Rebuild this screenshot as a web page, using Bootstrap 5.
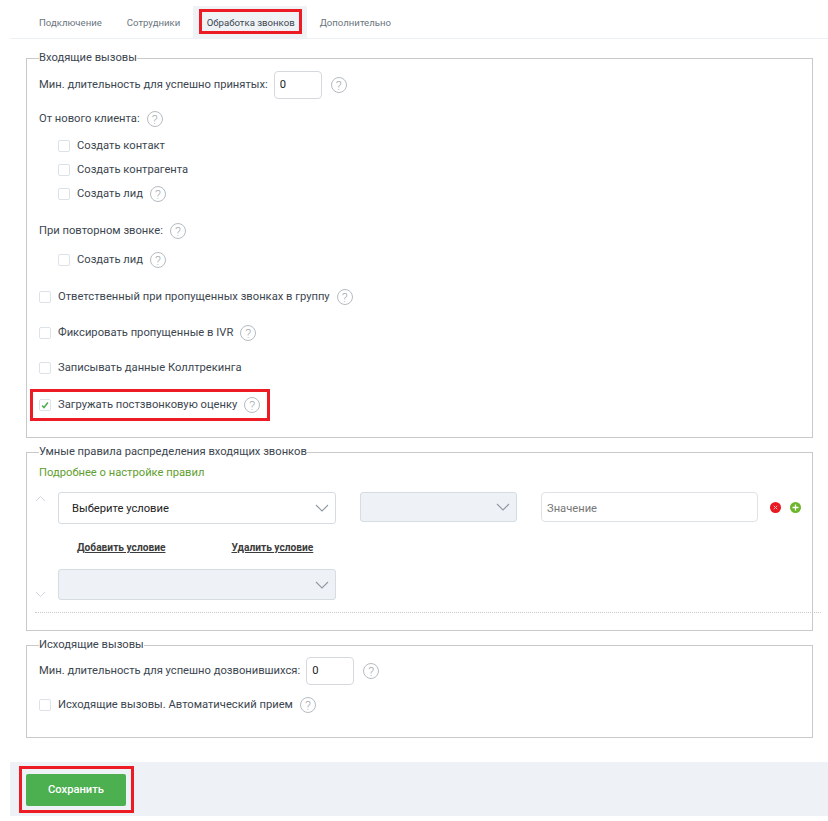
<!DOCTYPE html>
<html lang="ru">
<head>
  <meta charset="UTF-8">
  <meta name="viewport" content="width=device-width, initial-scale=1.0">
  <title>Обработка звонков</title>
  <link href="https://cdn.jsdelivr.net/npm/bootstrap@5.3.0/dist/css/bootstrap.min.css" rel="stylesheet" />
  <style>
    body {
      background-color: #fff;
      color: #3c4650;
      font-family: Roboto, "Liberation Sans", sans-serif;
      font-size: 11.2px;
      line-height: 16px;
      overflow: hidden;
    }
    .page-wrap { padding-left: 10px; }
    .tab-bar {
      height: 39px;
      padding: 6px 0 0 16px;
      border-bottom: 1px solid #edf1f5;
    }
    .tab-bar .nav-link {
      position: relative;
      height: 32px;
      padding: 9px 12px 0 13px;
      color: #6b7580;
      font-size: 9.6px;
      line-height: 16px;
    }
    .tab-bar .nav-link.tab-second { padding-right: 12.5px; }
    .tab-bar .nav-link.active-tab { background-color: #eff3f6; color: #3c4650; padding: 9px 12px 0 14px; }
    .red-mark { position: relative; }
    .red-mark::after {
      content: "";
      position: absolute;
      border: 3px solid #ed1c24;
      pointer-events: none;
    }
    .mark-tab::after { left: 6px; right: 5px; top: 3px; bottom: 4px; }
    .mark-rating::after { left: -9px; right: -10px; top: -8px; bottom: -8px; }
    .mark-save::after { left: -7px; right: -8px; top: -8px; bottom: -7px; }
    .form-area { padding-top: 12px; }
    .group-box {
      margin: 0 15px 7px 16px;
      padding: 0 12px;
      border: 1px solid #c9c9c9;
    }
    .group-box legend {
      float: none;
      width: auto;
      margin: 0;
      padding: 0;
      font-size: 11.2px;
      line-height: 14px;
      color: #3c4650;
    }
    .box-in { height: 387px; }
    .box-rules { height: 186px; }
    .box-out { height: 100px; }
    .num-input.form-control {
      width: 48px;
      height: 28px;
      min-height: 0;
      margin: 0 9px 0 6px;
      padding: 0 5px 2px;
      font-size: 11.2px;
      color: #222;
      border-color: #d5d9dd;
      border-radius: 4px;
    }
    .help-dot {
      display: inline-block;
      flex: none;
      width: 16px;
      height: 16px;
      margin-left: 7px;
      border: 1px solid #b5bcc2;
      border-radius: 50%;
      color: #a6adb3;
      font-size: 13px;
      font-weight: 300;
      line-height: 15px;
      text-align: center;
    }
    .num-input + .help-dot { margin-left: 0; }
    .check-box.form-check-input {
      width: 12px;
      height: 12px;
      margin: 0 7px 0 0;
      flex: none;
      border-color: #dbe2e8;
      border-radius: 2px;
    }
    .check-box.form-check-input:checked {
      background-color: #fff;
      border-color: #dbe2e8;
      background-size: 10px;
      background-image: url("data:image/svg+xml,%3Csvg xmlns='http://www.w3.org/2000/svg' viewBox='0 0 12 12'%3E%3Cpath d='M2.5 6.5l2.3 2.5 4.7-6' fill='none' stroke='%234caf50' stroke-width='1.8'/%3E%3C/svg%3E");
    }
    .line-row { display: flex; align-items: center; }
    .sub-row { padding-left: 19px; }
    .row-first { margin-top: 5px; }
    .row-top-in { margin-top: 6px; }
    .row-8 { margin-top: 8px; }
    .row-11 { margin-top: 11px; }
    .row-12 { margin-top: 12px; }
    .row-13 { margin-top: 13px; }
    .row-19 { margin-top: 19px; }
    .row-20 { margin-top: 20px; }
    .row-21 { margin-top: 21px; }
    .sel-field.form-select {
      height: 31px;
      min-height: 0;
      padding: 2px 30px 0 13px;
      font-size: 11.2px;
      color: #222;
      border-color: #d5dde3;
      border-radius: 3px;
      background-size: 16px 10px;
      background-position: right 5px center;
      background-image: url("data:image/svg+xml,%3Csvg xmlns='http://www.w3.org/2000/svg' viewBox='0 0 16 10'%3E%3Cpath d='M2 2l6 6 6-6' fill='none' stroke='%23909aa3' stroke-width='1.1'/%3E%3C/svg%3E");
    }
    .sel-field.sel-off { background-color: #eef1f5; }
    .sel-wide { width: 278px; }
    .sel-field.sel-tall { height: 32px; }
    .sel-field.sel-mid { width: 157px; height: 30px; margin-left: 24px; }
    .val-input.form-control {
      width: 217px;
      height: 30px;
      min-height: 0;
      margin-left: 24px;
      padding: 2px 5px 0;
      font-size: 11.2px;
      border-color: #dee2e6;
      border-radius: 4px;
    }
    .val-input::placeholder { color: #777; }
    .rule-icons { display: flex; gap: 9px; margin: 10px 0 0 12px; }
    .rule-links { margin: 16px 0 13px 19px; }
    .rule-links a { color: #3c3c3c; font-size: 10.2px; font-weight: 700; }
    .rule-links a + a { margin-left: 66px; }
    .rule-block {
      margin: 11px -21px 0 -4px;
      padding-bottom: 12px;
      border-bottom: 1px dotted #c9c9c9;
    }
    .rule-arrows { width: 23px; padding: 3px 0 2px; }
    .more-link { color: #5f9e2f; text-decoration: none; margin-top: 6px; }
    .footer-bar {
      height: 54px;
      margin-top: 24px;
      padding: 12px 16px;
      background-color: #eef1f5;
    }
    .save-btn.btn {
      display: block;
      width: 100px;
      height: 32px;
      padding: 0;
      background-color: #4caf50;
      border: 0;
      border-radius: 2px;
      color: #fff;
      font-size: 11.2px;
      font-weight: 500;
    }
  </style>
</head>
<body>
  <div class="page-wrap">
    <ul class="nav tab-bar">
      <li class="nav-item"><a class="nav-link" href="#">Подключение</a></li>
      <li class="nav-item"><a class="nav-link tab-second" href="#">Сотрудники</a></li>
      <li class="nav-item"><a class="nav-link active-tab red-mark mark-tab" href="#">Обработка звонков</a></li>
      <li class="nav-item"><a class="nav-link" href="#">Дополнительно</a></li>
    </ul>

    <div class="form-area">
      <fieldset class="group-box box-in">
        <legend>Входящие вызовы</legend>
        <div class="line-row row-top-in">
          <span>Мин. длительность для успешно принятых:</span>
          <input type="text" class="form-control num-input" value="0">
          <span class="help-dot">?</span>
        </div>
        <div class="line-row row-12">
          <span>От нового клиента:</span><span class="help-dot">?</span>
        </div>
        <div class="line-row sub-row row-11"><input class="form-check-input check-box" type="checkbox"><span>Создать контакт</span></div>
        <div class="line-row sub-row row-8"><input class="form-check-input check-box" type="checkbox"><span>Создать контрагента</span></div>
        <div class="line-row sub-row row-8"><input class="form-check-input check-box" type="checkbox"><span>Создать лид</span><span class="help-dot">?</span></div>
        <div class="line-row row-21">
          <span>При повторном звонке:</span><span class="help-dot">?</span>
        </div>
        <div class="line-row sub-row row-13"><input class="form-check-input check-box" type="checkbox"><span>Создать лид</span><span class="help-dot">?</span></div>
        <div class="line-row row-21"><input class="form-check-input check-box" type="checkbox"><span>Ответственный при пропущенных звонках в группу</span><span class="help-dot">?</span></div>
        <div class="line-row row-20"><input class="form-check-input check-box" type="checkbox"><span>Фиксировать пропущенные в IVR</span><span class="help-dot">?</span></div>
        <div class="line-row row-19"><input class="form-check-input check-box" type="checkbox"><span>Записывать данные Коллтрекинга</span></div>
        <div class="line-row row-21">
          <div class="d-inline-flex align-items-center red-mark mark-rating"><input class="form-check-input check-box" type="checkbox" checked><span>Загружать постзвонковую оценку</span><span class="help-dot">?</span></div>
        </div>
      </fieldset>

      <fieldset class="group-box box-rules">
        <legend>Умные правила распределения входящих звонков</legend>
        <a class="more-link d-block" href="#">Подробнее о настройке правил</a>
        <div class="rule-block d-flex">
          <div class="rule-arrows d-flex flex-column justify-content-between">
            <svg width="11" height="7" viewBox="0 0 11 7"><path d="M1 6l4.5-4.5L10 6" fill="none" stroke="#cfd5da"/></svg>
            <svg width="11" height="7" viewBox="0 0 11 7"><path d="M1 1l4.5 4.5L10 1" fill="none" stroke="#cfd5da"/></svg>
          </div>
          <div>
            <div class="d-flex align-items-start">
              <select class="form-select sel-field sel-wide sel-tall"><option>Выберите условие</option></select>
              <select class="form-select sel-field sel-off sel-mid"><option></option></select>
              <input type="text" class="form-control val-input" placeholder="Значение">
              <span class="rule-icons">
                <svg width="11" height="11" viewBox="0 0 11 11"><circle cx="5.5" cy="5.5" r="5.5" fill="#e8191f"/><path d="M3.8 3.8l3.4 3.4M7.2 3.8L3.8 7.2" stroke="#f7b7b7" stroke-width="1"/></svg>
                <svg width="11" height="11" viewBox="0 0 11 11"><circle cx="5.5" cy="5.5" r="5.5" fill="#6cb52d"/><path d="M5.5 2.5v6M2.5 5.5h6" stroke="#fff" stroke-width="1.3"/></svg>
              </span>
            </div>
            <div class="rule-links d-flex">
              <a href="#">Добавить условие</a>
              <a href="#">Удалить условие</a>
            </div>
            <select class="form-select sel-field sel-off sel-wide"><option></option></select>
          </div>
        </div>
      </fieldset>

      <fieldset class="group-box box-out mb-0">
        <legend>Исходящие вызовы</legend>
        <div class="line-row row-first">
          <span>Мин. длительность для успешно дозвонившихся:</span>
          <input type="text" class="form-control num-input" value="0">
          <span class="help-dot">?</span>
        </div>
        <div class="line-row row-12"><input class="form-check-input check-box" type="checkbox"><span>Исходящие вызовы. Автоматический прием</span><span class="help-dot">?</span></div>
      </fieldset>
    </div>

    <div class="footer-bar">
      <div class="d-inline-block red-mark mark-save"><button type="button" class="btn save-btn">Сохранить</button></div>
    </div>
  </div>
</body>
</html>
